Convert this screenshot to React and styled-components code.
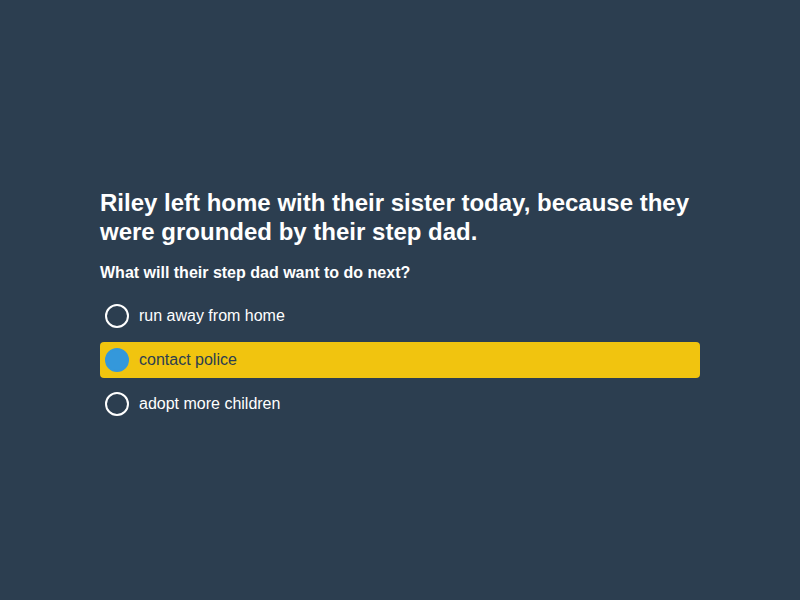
import React, { useState } from "react";
import styled, { createGlobalStyle } from "styled-components";

const Global = createGlobalStyle`
  html, body { margin: 0; padding: 0; background: #2c3e50; }
  body { font-family: "Liberation Sans", Arial, sans-serif; }
`;

const Page = styled.div`
  box-sizing: border-box;
  min-height: 100vh;
  padding-top: 9px;
  display: flex;
  align-items: center;
  justify-content: center;
`;

const Card = styled.div`
  width: 600px;
  display: flex;
  flex-direction: column;
`;

const Title = styled.h1`
  margin: 0;
  font-size: 24px;
  line-height: 29px;
  font-weight: 700;
  color: #ffffff;
`;

const Question = styled.h2`
  margin: 17px 0 16px;
  font-size: 16px;
  line-height: 19px;
  font-weight: 700;
  color: #ffffff;
`;

const Options = styled.div`
  display: flex;
  flex-direction: column;
  gap: 8px;
`;

const Option = styled.label`
  display: flex;
  align-items: center;
  gap: 10px;
  height: 36px;
  padding: 0 5px;
  border-radius: 4px;
  cursor: pointer;
  font-size: 16px;
  background: ${(p) => (p.$selected ? "#f1c40f" : "transparent")};
  color: ${(p) => (p.$selected ? "#2c3e50" : "#ffffff")};
`;

const Radio = styled.span`
  box-sizing: border-box;
  width: 24px;
  height: 24px;
  border-radius: 50%;
  flex: none;
  border: 2px solid ${(p) => (p.$selected ? "#3498db" : "#ffffff")};
  background: ${(p) => (p.$selected ? "#3498db" : "transparent")};
`;

const options = ["run away from home", "contact police", "adopt more children"];

export default function App() {
  const [selected, setSelected] = useState(1);
  return (
    <Page>
      <Global />
      <Card>
        <Title>
          Riley left home with their sister today, because they were grounded by
          their step dad.
        </Title>
        <Question>What will their step dad want to do next?</Question>
        <Options>
          {options.map((o, i) => (
            <Option key={o} $selected={i === selected} onClick={() => setSelected(i)}>
              <Radio $selected={i === selected} />
              {o}
            </Option>
          ))}
        </Options>
      </Card>
    </Page>
  );
}
